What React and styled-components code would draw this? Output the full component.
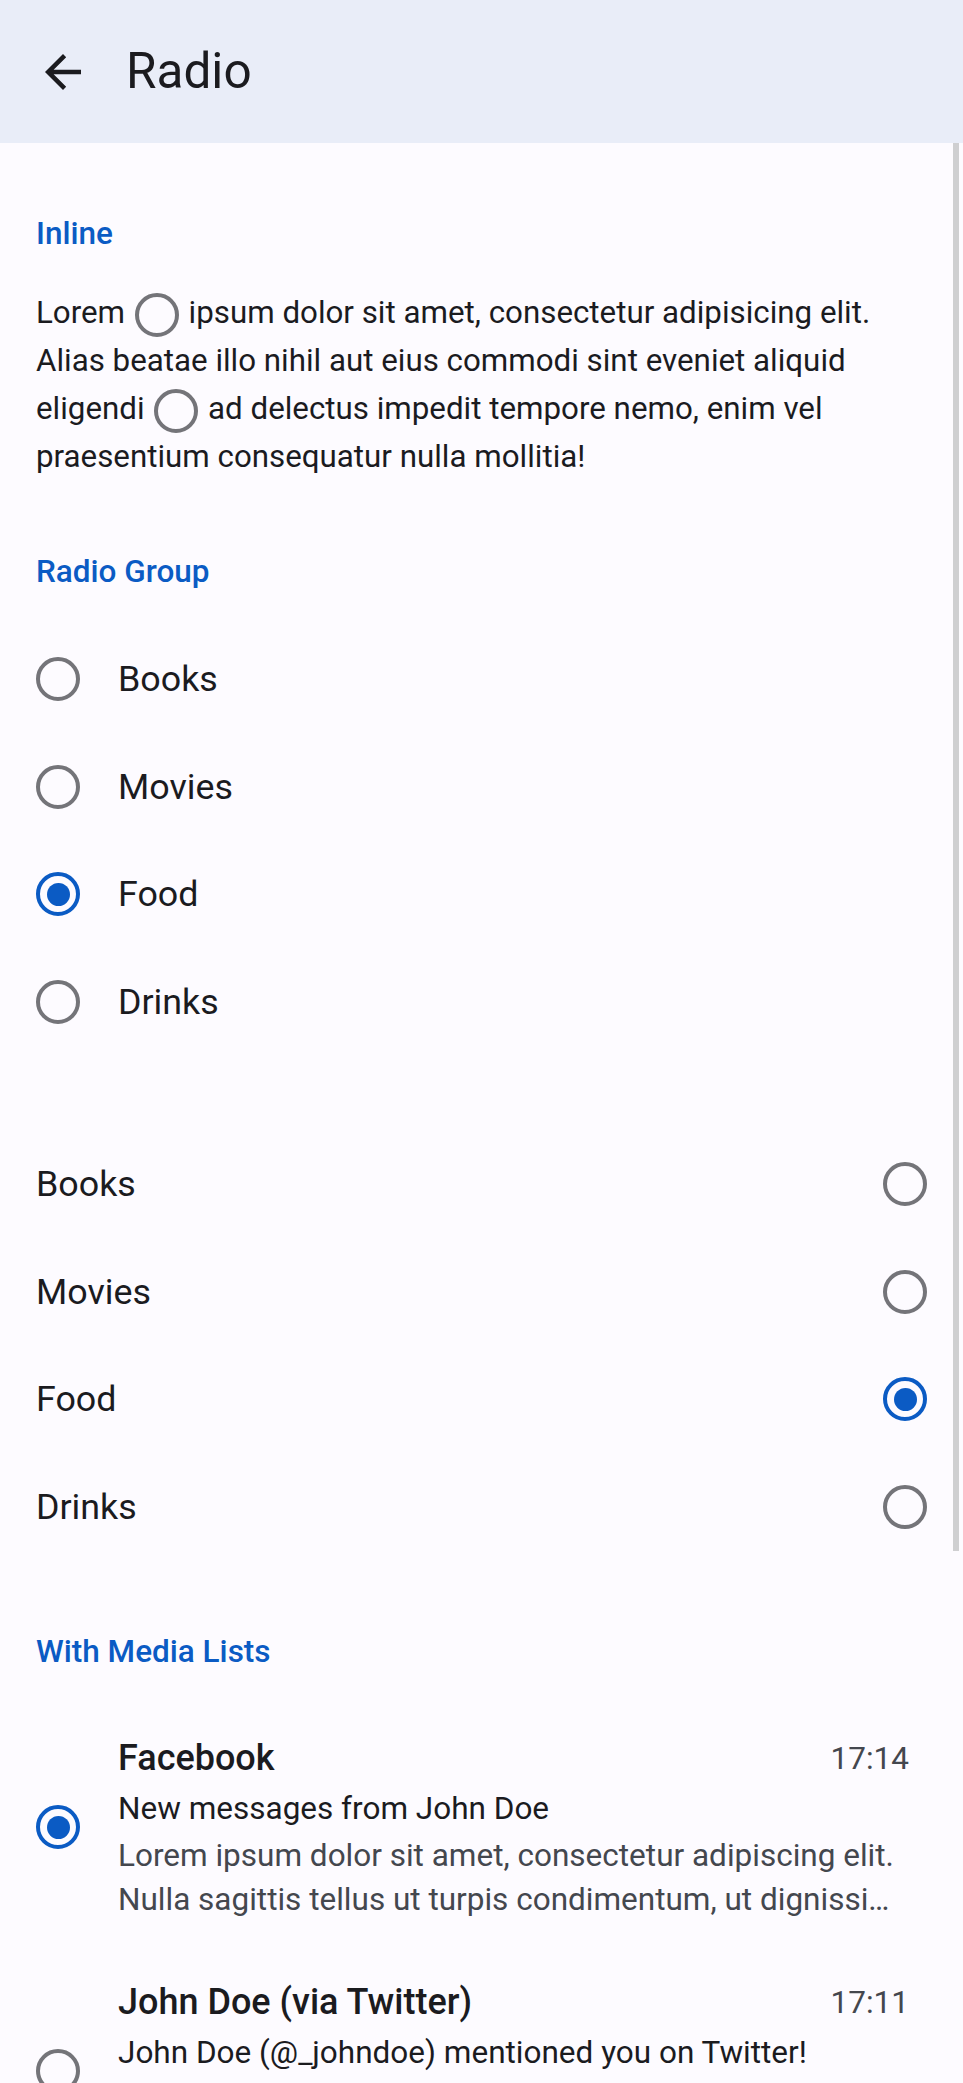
import React from 'react';
import styled, { createGlobalStyle } from 'styled-components';

const GlobalStyle = createGlobalStyle`
  html, body {
    margin: 0;
    padding: 0;
    overflow: hidden;
    background: #fdfbff;
  }
`;

const Page = styled.div`
  position: relative;
  height: 2083px;
  overflow: hidden;
  background: #fdfbff;
  font-family: Roboto, "Noto Sans", sans-serif;
  color: #1b1b1f;
`;

const TopBar = styled.header`
  height: 143px;
  display: flex;
  align-items: center;
  gap: 36px;
  padding-left: 36px;
  background: #e9edf8;
`;

const BackIcon = styled.svg`
  width: 54px;
  height: 54px;
  fill: #1b1b1f;
  flex-shrink: 0;
`;

const TopTitle = styled.h1`
  margin: 0;
  font-size: 49.5px;
  font-weight: 400;
  line-height: 1;
  color: #1b1b1f;
`;

const Content = styled.main`
  display: flex;
  flex-direction: column;
`;

const SectionTitle = styled.h2`
  margin: 69px 36px 31px;
  font-size: 31.5px;
  font-weight: 500;
  line-height: 44px;
  color: #0b5bc4;
`;

const Paragraph = styled.p`
  margin: 2px 48px 0 36px;
  font-size: 31.3px;
  line-height: 48px;
  color: #1b1b1f;
`;

const RadioMark = styled.span`
  box-sizing: border-box;
  display: ${p => (p.inline ? 'inline-flex' : 'flex')};
  align-items: center;
  justify-content: center;
  width: 44px;
  height: 44px;
  flex-shrink: 0;
  border-radius: 50%;
  border: 4.5px solid ${p => (p.checked ? '#0b5bc4' : '#747479')};
  vertical-align: middle;
  margin: ${p => (p.inline ? '0 2px' : '0')};

  &::after {
    content: '';
    display: ${p => (p.checked ? 'block' : 'none')};
    width: 23px;
    height: 23px;
    border-radius: 50%;
    background: #0b5bc4;
  }
`;

const Group = styled.div`
  display: flex;
  flex-direction: column;
  margin-top: ${p => p.gapTop || 0}px;
`;

const OptionRow = styled.label`
  height: 107.75px;
  display: flex;
  align-items: center;
  gap: 38px;
  padding: 0 36px;
  flex-direction: ${p => (p.trailing ? 'row-reverse' : 'row')};
  justify-content: ${p => (p.trailing ? 'space-between' : 'flex-start')};
`;

const OptionLabel = styled.span`
  font-size: 35.8px;
  line-height: 48px;
  color: #1b1b1f;
`;

const MediaItem = styled.div`
  display: flex;
  align-items: center;
  gap: 38px;
  padding: 27px 54px 27px 36px;
`;

const MediaBody = styled.div`
  flex: 1;
  min-width: 0;
  display: flex;
  flex-direction: column;
`;

const MediaHead = styled.div`
  display: flex;
  align-items: center;
  justify-content: space-between;
  height: 52px;
`;

const MediaTitle = styled.span`
  font-size: 36px;
  font-weight: 500;
  color: #1b1b1f;
`;

const MediaTime = styled.span`
  font-size: 31.5px;
  color: #44474e;
`;

const MediaSubtitle = styled.div`
  font-size: 31.5px;
  line-height: 50px;
  color: #1b1b1f;
`;

const MediaText = styled.div`
  font-size: 31.5px;
  line-height: 44px;
  color: #44474e;
  padding-right: 12px;
  white-space: nowrap;
  overflow: hidden;
  text-overflow: ellipsis;
`;

const ScrollThumb = styled.div`
  position: absolute;
  top: 143px;
  right: 4px;
  width: 6px;
  height: 1408px;
  background: #cfcfd1;
`;

const groupOptions = [
  { label: 'Books', checked: false },
  { label: 'Movies', checked: false },
  { label: 'Food', checked: true },
  { label: 'Drinks', checked: false },
];

const mediaItems = [
  {
    title: 'Facebook',
    time: '17:14',
    subtitle: 'New messages from John Doe',
    lines: [
      'Lorem ipsum dolor sit amet, consectetur adipiscing elit.',
      'Nulla sagittis tellus ut turpis condimentum, ut dignissim lacus tincidunt.',
    ],
    checked: true,
  },
  {
    title: 'John Doe (via Twitter)',
    time: '17:11',
    subtitle: 'John Doe (@_johndoe) mentioned you on Twitter!',
    lines: [
      'Lorem ipsum dolor sit amet, consectetur adipiscing elit.',
      'Nulla sagittis tellus ut turpis condimentum, ut dignissim lacus tincidunt.',
    ],
    checked: false,
  },
];

function ArrowBack() {
  return (
    <BackIcon viewBox="0 0 24 24">
      <path d="M20 11H7.83l5.59-5.59L12 4l-8 8 8 8 1.41-1.41L7.83 13H20v-2z" />
    </BackIcon>
  );
}

export default function App() {
  return (
    <Page>
      <GlobalStyle />
      <TopBar>
        <ArrowBack />
        <TopTitle>Radio</TopTitle>
      </TopBar>

      <Content>
        <SectionTitle>Inline</SectionTitle>
        <Paragraph>
          Lorem <RadioMark inline /> ipsum dolor sit amet, consectetur adipisicing elit. Alias beatae illo nihil aut eius
          commodi sint eveniet aliquid eligendi <RadioMark inline /> ad delectus impedit tempore nemo, enim vel
          praesentium consequatur nulla mollitia!
        </Paragraph>

        <SectionTitle>Radio Group</SectionTitle>
        <Group>
          {groupOptions.map(o => (
            <OptionRow key={o.label}>
              <RadioMark checked={o.checked} />
              <OptionLabel>{o.label}</OptionLabel>
            </OptionRow>
          ))}
        </Group>
        <Group gapTop={74}>
          {groupOptions.map(o => (
            <OptionRow key={o.label} trailing>
              <RadioMark checked={o.checked} />
              <OptionLabel>{o.label}</OptionLabel>
            </OptionRow>
          ))}
        </Group>

        <SectionTitle>With Media Lists</SectionTitle>
        {mediaItems.map(item => (
          <MediaItem key={item.title}>
            <RadioMark checked={item.checked} />
            <MediaBody>
              <MediaHead>
                <MediaTitle>{item.title}</MediaTitle>
                <MediaTime>{item.time}</MediaTime>
              </MediaHead>
              <MediaSubtitle>{item.subtitle}</MediaSubtitle>
              {item.lines.map((l, i) => (
                <MediaText key={i}>{l}</MediaText>
              ))}
            </MediaBody>
          </MediaItem>
        ))}
      </Content>
      <ScrollThumb />
    </Page>
  );
}
